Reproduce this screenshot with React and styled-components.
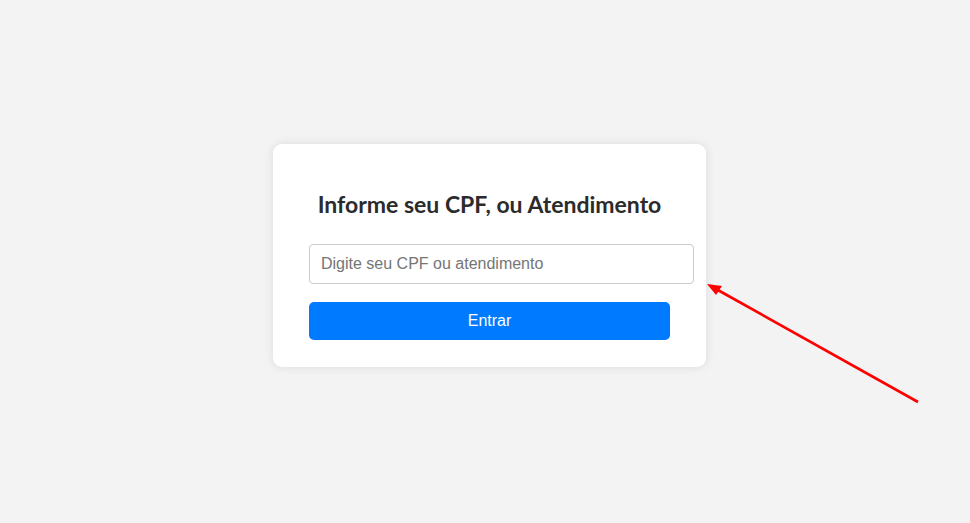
import styled, { createGlobalStyle } from 'styled-components'

const GlobalStyle = createGlobalStyle`
  html, body {
    margin: 0;
    padding: 0;
    background: #f3f3f3;
    font-family: "Liberation Sans", Arial, sans-serif;
  }
`

export default function App() {
  return (
    <>
      <GlobalStyle />
      <Page>
        <Card>
          <Title>Informe seu CPF, ou Atendimento</Title>
          <Input type='text' placeholder='Digite seu CPF ou atendimento' />
          <Button type='button'>Entrar</Button>
        </Card>
        <Arrow width='970' height='523' viewBox='0 0 970 523'>
          <line x1='918' y1='402' x2='716' y2='289' stroke='#ff0000' strokeWidth='2.6' />
          <polygon points='707,284 722,286 716,295' fill='#ff0000' />
        </Arrow>
      </Page>
    </>
  )
}

const Page = styled.div`
  position: relative;
  height: 523px;
  display: flex;
  justify-content: center;
  align-items: flex-start;
  padding: 144px 0 0 9px;
  box-sizing: border-box;
  overflow: hidden;
`

const Card = styled.div`
  width: 361px;
  padding: 20px 36px 27px;
  background: #fff;
  border-radius: 9px;
  box-shadow: 0 0 10px rgba(0, 0, 0, 0.1);
`

const Title = styled.h2`
  margin: 26px -30px 26px;
  text-align: center;
  white-space: nowrap;
  font-family: Lato, "Open Sans", sans-serif;
  font-size: 23px;
  font-weight: 700;
  color: #2b2b2b;
`

const Input = styled.input`
  display: block;
  width: 100%;
  padding: 10px 11px;
  margin-bottom: 18px;
  border: 1px solid #cccccc;
  border-radius: 4px;
  font-family: "Liberation Sans", Arial, sans-serif;
  font-size: 16px;
  color: #333;
  outline: none;

  &::placeholder {
    color: #757575;
  }
`

const Button = styled.button`
  display: block;
  width: 100%;
  height: 38px;
  border: none;
  border-radius: 5px;
  background: #007bff;
  color: #fff;
  font-family: "Liberation Sans", Arial, sans-serif;
  font-size: 16px;
  cursor: pointer;
`

const Arrow = styled.svg`
  position: absolute;
  top: 0;
  left: 0;
  pointer-events: none;
`
